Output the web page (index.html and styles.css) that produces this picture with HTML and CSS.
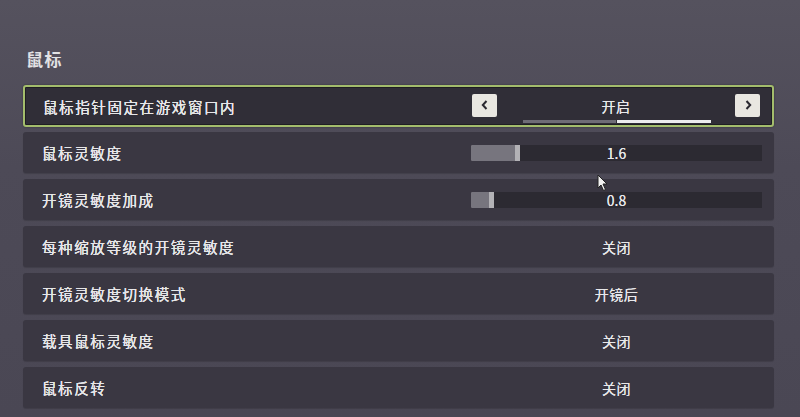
FILE: index.html
```html
<!DOCTYPE html>
<html lang="zh-CN">
<head>
<meta charset="utf-8">
<title>鼠标设置</title>
<link rel="stylesheet" href="styles.css">
</head>
<body>
<main class="page">
  <h2 class="section-title">鼠标</h2>
  <ul class="settings">
    <li class="row row-active">
      <span class="label">鼠标指针固定在游戏窗口内</span>
      <div class="value selector">
        <button class="arrow" aria-label="上一个"><svg viewBox="0 0 12 12" width="12" height="12"><path d="M7.5 2 L3.8 6 L7.5 10" fill="none" stroke="#2a2830" stroke-width="2"/></svg></button>
        <div class="choice">
          <span class="choice-text">开启</span>
          <div class="pager"><span class="seg"></span><span class="seg seg-on"></span></div>
        </div>
        <button class="arrow" aria-label="下一个"><svg viewBox="0 0 12 12" width="12" height="12"><path d="M4.5 2 L8.2 6 L4.5 10" fill="none" stroke="#2a2830" stroke-width="2"/></svg></button>
      </div>
    </li>
    <li class="row">
      <span class="label">鼠标灵敏度</span>
      <div class="value slider">
        <div class="fill" style="width:49px"></div>
        <span class="slider-text">1.6</span>
      </div>
    </li>
    <li class="row">
      <span class="label">开镜灵敏度加成</span>
      <div class="value slider">
        <div class="fill" style="width:23px"></div>
        <span class="slider-text">0.8</span>
      </div>
    </li>
    <li class="row">
      <span class="label">每种缩放等级的开镜灵敏度</span>
      <div class="value"><span class="value-text">关闭</span></div>
    </li>
    <li class="row">
      <span class="label">开镜灵敏度切换模式</span>
      <div class="value"><span class="value-text">开镜后</span></div>
    </li>
    <li class="row">
      <span class="label">载具鼠标灵敏度</span>
      <div class="value"><span class="value-text">关闭</span></div>
    </li>
    <li class="row">
      <span class="label">鼠标反转</span>
      <div class="value"><span class="value-text">关闭</span></div>
    </li>
  </ul>
  <svg class="cursor" viewBox="0 0 12 18" width="12" height="18"><path d="M1 1 L1 14 L4 11 L6.5 16.5 L8.5 15.5 L6 10 L10 10 Z" fill="#f2f2f2" stroke="#222" stroke-width="1"/></svg>
</main>
</body>
</html>
```
FILE: styles.css
```css
* { box-sizing: border-box; }
html, body {
  margin: 0;
  padding: 0;
  width: 800px;
  height: 417px;
  overflow: hidden;
}
body {
  background: linear-gradient(180deg, #55525e 0%, #4d4a57 40%, #4a4754 100%);
  font-family: "Noto Sans CJK SC", "Noto Sans", sans-serif;
  color: #e6e6e8;
}
.page {
  position: relative;
  padding: 50px 26px 0 23px;
}
.section-title {
  margin: 0 0 17px 3px;
  font-size: 17px;
  line-height: 18px;
  font-weight: 700;
  color: #e2e2e4;
  letter-spacing: 1.5px;
}
.settings {
  list-style: none;
  margin: 0;
  padding: 0;
  display: flex;
  flex-direction: column;
  gap: 6px;
}
.row {
  height: 41px;
  display: flex;
  align-items: center;
  background: #3a3742;
  border-radius: 3px;
  padding: 0 12px 0 19px;
  box-shadow: 0 1px 1px rgba(0,0,0,0.15);
}
.row-active {
  height: 42px;
  margin-bottom: -1px;
  background: #302e37;
  border: 2px solid #a3bd6c;
  padding-left: 18px;
  padding-right: 11px;
  box-shadow: inset 0 0 0 1px rgba(0,0,0,0.35), 0 0 2px rgba(0,0,0,0.4);
}
.label {
  flex: 1;
  font-size: 14.5px;
  letter-spacing: 1.6px;
  color: #e6e6e8;
  text-shadow: 0 0 0.6px #e6e6e8, 0 0 0.6px #e6e6e8;
}
.value {
  width: 291px;
  height: 100%;
  display: flex;
  align-items: center;
  justify-content: center;
  position: relative;
}
.value-text, .choice-text, .slider-text {
  text-shadow: 0 0 0.6px #e8e8ea;
}
.value-text {
  font-size: 14px;
  letter-spacing: 0.5px;
  color: #e8e8ea;
}
.selector {
  justify-content: space-between;
  padding: 0 1px 0 2px;
}
.arrow {
  width: 25px;
  height: 23px;
  border: none;
  border-radius: 2px;
  background: #e9e7e1;
  display: flex;
  align-items: center;
  justify-content: center;
  padding: 0;
  margin-top: -2px;
}
.choice {
  flex: 1;
  height: 100%;
  display: flex;
  flex-direction: column;
  align-items: center;
  padding-top: 9px;
}
.choice-text {
  font-size: 14px;
  line-height: 20px;
  letter-spacing: 0.5px;
  color: #e8e8ea;
}
.pager {
  display: flex;
  gap: 1px;
  margin-top: 4px;
  margin-left: 1px;
}
.seg {
  width: 93px;
  height: 3px;
  background: #6e6c76;
}
.seg-on {
  width: 94px;
  background: #ececee;
}
.slider {
  height: 16px;
  background: #2c2a32;
  justify-content: flex-start;
  margin-top: 1px;
}
.fill {
  height: 100%;
  background: #77757e;
  border-right: 5px solid #b3b2b6;
  border-radius: 1px 0 0 1px;
}
.slider-text {
  position: absolute;
  left: 0;
  right: 0;
  top: -2px;
  text-align: center;
  font-size: 14px;
  line-height: 20px;
  color: #e8e8ea;
}
.cursor {
  position: absolute;
  left: 597px;
  top: 174px;
}
```
